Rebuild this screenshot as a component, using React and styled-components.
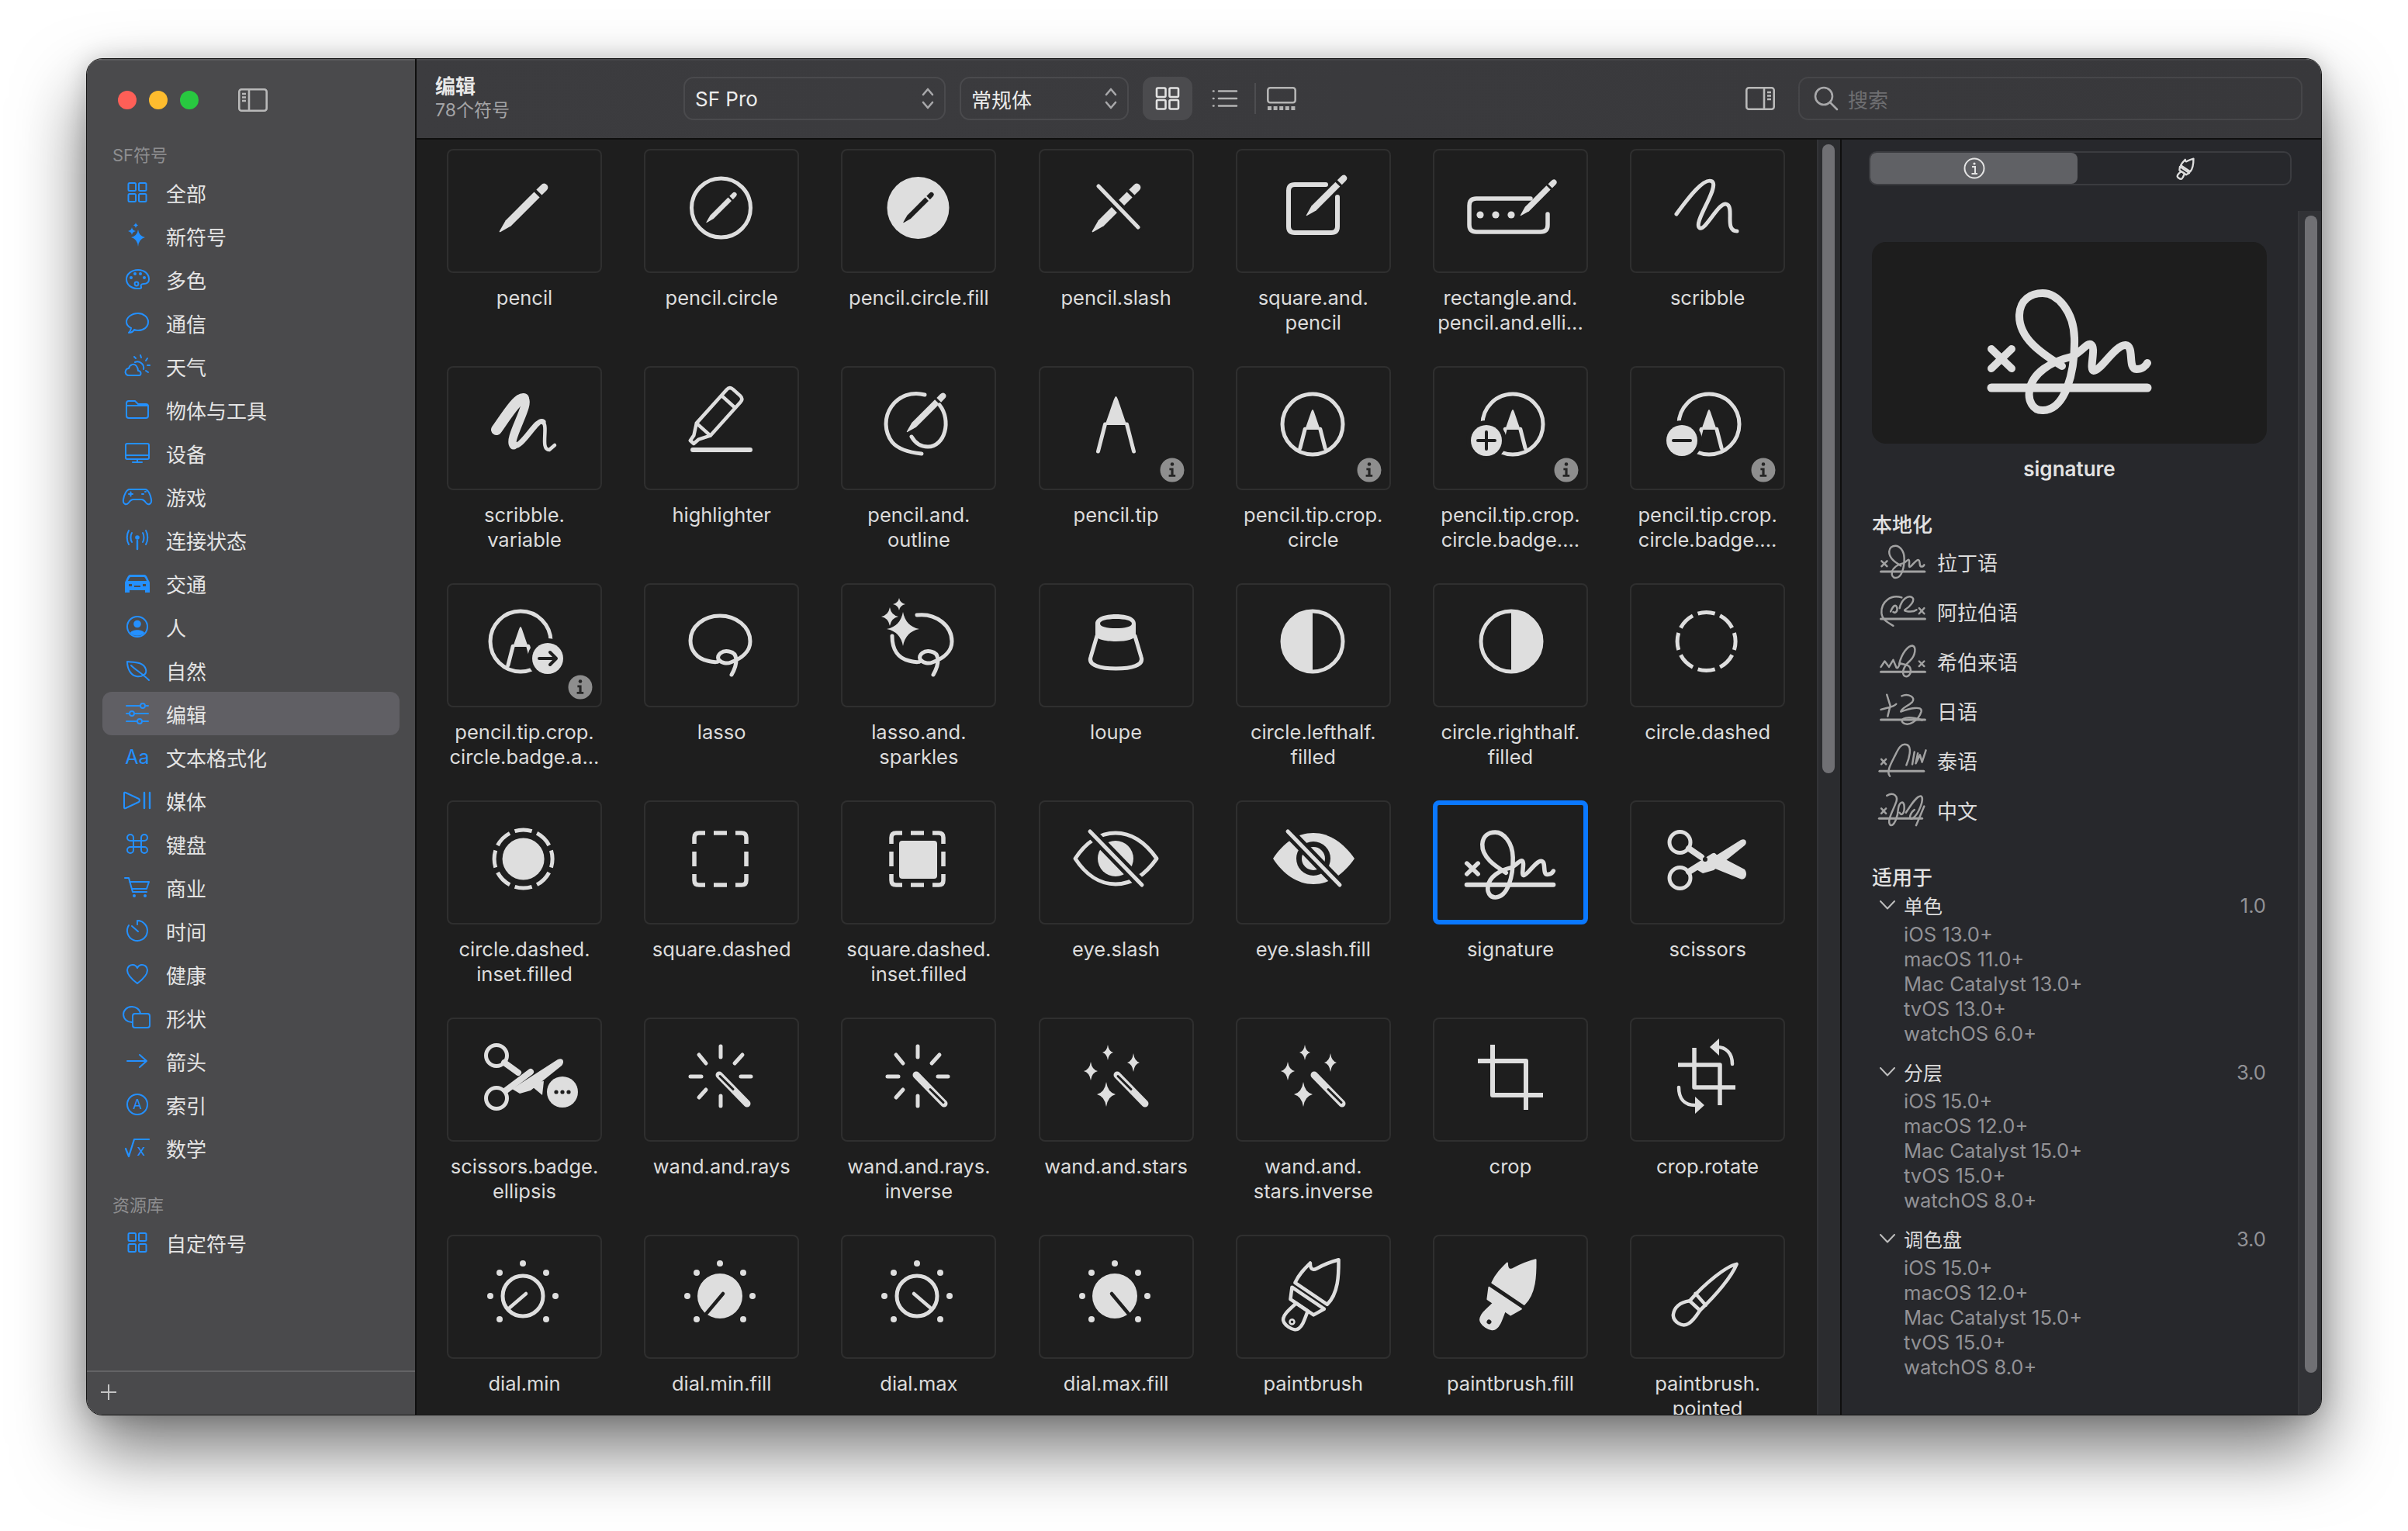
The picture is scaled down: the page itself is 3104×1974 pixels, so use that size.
import React from 'react';
import styled, { createGlobalStyle } from 'styled-components';

const L = '#dedede';
const D = '#1e1e1e';
const FONT = 'Inter, "Noto Sans CJK SC", sans-serif';

const Global = createGlobalStyle`
  html, body { margin: 0; padding: 0; background: #fff; width: 3104px; height: 1974px; overflow: hidden; }
  body { font-family: ${FONT}; }
  * { box-sizing: border-box; }
`;

const Page = styled.div`
  width: 3104px;
  height: 1974px;
  padding: 76px 0 0 112px;
`;
const Win = styled.div`
  position: relative;
  width: 2880px;
  height: 1748px;
  display: flex;
  border-radius: 20px;
  overflow: hidden;
  outline: 1px solid #151515;
  box-shadow: 0 44px 90px rgba(0, 0, 0, 0.55), 0 0 30px rgba(0, 0, 0, 0.18);
`;

/* sidebar */
const Sidebar = styled.aside`
  width: 425px;
  flex: none;
  display: flex;
  flex-direction: column;
  background: #4a4a4c;
  border-right: 2px solid #0f0f0f;
  box-shadow: inset 0 2px 0 rgba(255, 255, 255, 0.1);
`;
const TitleBar = styled.div`
  height: 109px;
  flex: none;
  display: flex;
  align-items: center;
  padding: 0 0 4px 40px;
`;
const Light = styled.span`
  width: 24px;
  height: 24px;
  border-radius: 50%;
  margin-right: 16px;
  background: ${(p) => p.$c};
`;
const PaneIcon = styled.svg`
  width: 38px;
  height: 30px;
  display: block;
  flex: none;
  margin-left: ${(p) => p.$ml || 0}px;
  color: #b9b9b9;
`;
const SideHead = styled.div`
  font-size: 22px;
  line-height: 30px;
  color: #8e8e90;
  padding-left: 33px;
  margin-top: ${(p) => p.$mt}px;
  margin-bottom: ${(p) => p.$mb}px;
`;
const SideRow = styled.div`
  height: 56px;
  flex: none;
  margin: 0 20px 0 20px;
  padding-left: 23px;
  display: flex;
  align-items: center;
  gap: 15px;
  font-size: 26px;
  color: #e4e4e4;
  border-radius: 12px;
  background: ${(p) => (p.$active ? '#605f64' : 'transparent')};
`;
const SideSvg = styled.svg`
  width: 44px;
  height: 36px;
  flex: none;
  display: block;
  color: #2490ff;
`;
const SideFoot = styled.div`
  margin-top: auto;
  height: 57px;
  flex: none;
  border-top: 2px solid #636365;
  display: flex;
  align-items: center;
  padding: 0 0 3px 16px;
`;

/* main */
const Right = styled.div`
  flex: 1;
  min-width: 0;
  display: flex;
  flex-direction: column;
`;
const Toolbar = styled.header`
  height: 104px;
  flex: none;
  display: flex;
  align-items: center;
  padding: 0 24px 0 24px;
  background: linear-gradient(90deg, #3c3c3f, #38383b);
  border-bottom: 2px solid #0f0f0f;
  box-shadow: inset 0 2px 0 rgba(255, 255, 255, 0.06);
`;
const TitleBlock = styled.div`
  width: 320px;
  flex: none;
`;
const Title = styled.div`
  font-size: 26px;
  line-height: 30px;
  font-weight: 600;
  color: #e8e8e8;
  margin-top: -3px;
`;
const Sub = styled.div`
  font-size: 23px;
  line-height: 26px;
  margin-top: 2px;
  color: #a4a4a6;
`;
const Popup = styled.div`
  width: ${(p) => p.$w}px;
  height: 56px;
  margin-right: 18px;
  flex: none;
  display: flex;
  align-items: center;
  justify-content: space-between;
  padding: 0 12px 0 13px;
  border: 2px solid #4a4a4d;
  border-radius: 13px;
  font-size: 26px;
  color: #ececec;
`;
const ViewBtn = styled.div`
  width: 64px;
  height: 56px;
  flex: none;
  display: flex;
  align-items: center;
  justify-content: center;
  border-radius: 13px;
  margin-right: ${(p) => p.$mr || 0}px;
  background: ${(p) => (p.$on ? '#4b4b4e' : 'transparent')};
`;
const Divider = styled.span`
  width: 2px;
  height: 40px;
  margin: 0 1px 0 -2px;
  flex: none;
  background: #4d4d50;
`;
const Spacer = styled.div`
  flex: 1;
`;
const Search = styled.div`
  width: 650px;
  height: 56px;
  margin-left: 30px;
  flex: none;
  display: flex;
  align-items: center;
  gap: 12px;
  padding-left: 18px;
  border: 2px solid #464649;
  border-radius: 13px;
  font-size: 26px;
  color: #6e6e71;
`;
const Body = styled.div`
  flex: 1;
  min-height: 0;
  display: flex;
`;
const GridArea = styled.main`
  flex: 1;
  min-width: 0;
  overflow: hidden;
  background: ${D};
  padding: 12px 0 0 39px;
`;
const Grid = styled.div`
  display: grid;
  grid-template-columns: repeat(7, 200px);
  grid-auto-rows: 280px;
  column-gap: 54.2px;
`;
const Cell = styled.div`
  display: flex;
  flex-direction: column;
  align-items: center;
`;
const Tile = styled.div`
  width: 200px;
  height: 160px;
  flex: none;
  border: ${(p) => (p.$sel ? '6px solid #0a78ff' : '2px solid #2f2f2f')};
  border-radius: 8px;
  background: ${D};
`;
const TileSvg = styled.svg`
  display: block;
  width: 200px;
  height: 160px;
  margin: ${(p) => (p.$sel ? -6 : -2)}px;
`;
const Label = styled.div`
  margin-top: 16px;
  width: 240px;
  text-align: center;
  white-space: pre-line;
  font-size: 25.5px;
  line-height: 32px;
  color: #dcdcdc;
`;
const ScrollTrack = styled.div`
  width: 30px;
  flex: none;
  background: #2b2c2f;
  border-left: 2px solid #333438;
  padding: 6px 0 0 5px;
`;
const Thumb = styled.div`
  width: 16px;
  height: ${(p) => p.$h}px;
  border-radius: 8px;
  background: #707074;
`;

/* inspector */
const Inspector = styled.section`
  position: relative;
  width: 620px;
  flex: none;
  background: #27282c;
  border-left: 2px solid #0f0f0f;
  padding: 15px 0 0 39px;
  color: #dcdcdc;
  overflow: hidden;
`;
const InspectorTrack = styled(ScrollTrack)`
  position: absolute;
  right: 0;
  top: 92px;
  bottom: 0;
  padding: 6px 0 0 7px;
  background: #313236;
  border-left: 2px solid #37383c;
`;
const Seg = styled.div`
  width: 545px;
  height: 44px;
  margin-left: -4px;
  display: flex;
  border: 2px solid #3b3c40;
  border-radius: 10px;
`;
const SegBtn = styled.div`
  width: ${(p) => p.$w}px;
  display: flex;
  align-items: center;
  justify-content: center;
  padding-left: ${(p) => p.$pl || 0}px;
  border-radius: 8px;
  background: ${(p) => (p.$on ? '#606165' : 'transparent')};
`;
const Preview = styled.div`
  width: 509px;
  height: 260px;
  margin-top: 73px;
  display: flex;
  justify-content: center;
  padding-top: 64px;
  border-radius: 18px;
  background: #1d1d1d;
`;
const PreviewName = styled.div`
  width: 509px;
  margin-top: 17px;
  text-align: center;
  font-size: 26px;
  line-height: 32px;
  font-weight: 600;
  color: #e2e2e2;
`;
const Head = styled.div`
  font-size: 26px;
  line-height: 32px;
  font-weight: 500;
  color: #e2e2e2;
  margin-top: ${(p) => p.$mt}px;
`;
const LangList = styled.div`
  margin-top: -1px;
`;
const LangRow = styled.div`
  height: 64px;
  display: flex;
  align-items: center;
  gap: 15px;
  padding-left: 11px;
  font-size: 26px;
  color: #dcdcdc;
`;
const LangSvg = styled.svg`
  width: 58px;
  height: 43px;
  flex: none;
  overflow: visible;
`;
const Group = styled.div`
  width: 508px;
  margin-top: ${(p) => p.$mt}px;
`;
const GroupHead = styled.div`
  height: 32px;
  display: flex;
  align-items: center;
  font-size: 25px;
  color: #dcdcdc;
  padding-left: 10px;
`;
const GroupName = styled.span`
  margin-left: 11px;
  flex: 1;
`;
const Version = styled.span`
  font-size: 25.6px;
  color: #929296;
`;
const Platforms = styled.div`
  margin-top: 6px;
  padding-left: 41px;
  font-size: 25.6px;
  line-height: 32px;
  color: #929296;
`;

/* cell glyph parts */
const Pen = ({ x, y, s = 1, c = L }) => (
  <g transform={`translate(${x} ${y}) rotate(45) scale(${s})`} fill={c} stroke="none">
    <path d="M-.6 0 L-5 -16 V-68 H5 V-16 L.6 0Z" />
    <path d="M-5 -72 H5 V-80 Q5 -86 0 -86 Q-5 -86 -5 -80Z" />
  </g>
);
const Spark = ({ x, y, r, w }) => {
  const h = w || r;
  const k = 0.16;
  return (
    <path
      fill={L}
      stroke="none"
      d={`M${x} ${y - r} Q${x + h * k} ${y - r * k} ${x + h} ${y} Q${x + h * k} ${y + r * k} ${x} ${y + r} Q${x - h * k} ${y + r * k} ${x - h} ${y} Q${x - h * k} ${y - r * k} ${x} ${y - r}Z`}
    />
  );
};
const Tip = ({ x, y, s = 1 }) => (
  <g transform={`translate(${x} ${y}) scale(${s})`}>
    <path fill={L} stroke="none" d="M0 0 C2 0 5 12 14 37 H-14 C-5 12 -2 0 0 0Z" />
    <path strokeWidth={5 / s} d="M-14 36 L-23 71 M14 36 L23 71" />
  </g>
);
const Info = () => (
  <g transform="translate(172 134)" stroke="none">
    <circle r="15.5" fill="#8e8e8e" />
    <circle cy="-7.5" r="2.3" fill="#262626" />
    <path fill="#262626" d="M-3.6 -2.6 H1.6 V6 H4.2 V8.8 H-4.4 V6 H-1.6 V.2 H-3.6Z" />
  </g>
);
const Ring = ({ x, y, r = 39 }) => <circle cx={x} cy={y} r={r} />;
const Badge = ({ x, y, children }) => (
  <g transform={`translate(${x} ${y})`}>
    <circle r="26" fill={D} stroke="none" />
    <circle r="20" fill={L} stroke="none" />
    <g stroke={D} strokeWidth="4">{children}</g>
  </g>
);
const Wand = ({ x1, y1, x2, y2, hollow }) => {
  const mx = x1 + (x2 - x1) * 0.5;
  const my = y1 + (y2 - y1) * 0.5;
  const a = hollow === 'top' ? [x1 + 1, y1 + 1.5, mx, my] : [mx, my, x2 - 1, y2 - 1.5];
  return (
    <g>
      <path strokeWidth="9" d={`M${x1} ${y1} L${x2} ${y2}`} />
      <path strokeWidth="3" stroke={D} d={`M${a[0]} ${a[1]} L${a[2]} ${a[3]}`} />
    </g>
  );
};
const Rays = () => (
  <path d="M99 37 V51 M99 101 V114 M60 76 H74 M125 76 H138 M71 48 L80 59 M127 48 L117 59 M80 93 L71 103" />
);
const STARS = (
  <g>
    <Spark x={89} y={45} r={10} w={7} />
    <Spark x={122} y={58} r={12} w={8} />
    <Spark x={67} y={69} r={12} w={9} />
    <Spark x={87} y={99} r={16} w={12} />
  </g>
);
const Dial = ({ x, needle, fill }) => {
  const y = 79;
  const dots = [[0, -42], [-30, -30], [30, -30], [-42, 0], [42, 0], [-30, 30], [30, 30]];
  return (
    <g>
      {dots.map(([dx, dy]) => (
        <circle key={dx + '_' + dy} cx={x + dx} cy={y + dy} r="4" fill={L} stroke="none" />
      ))}
      {fill ? <circle cx={x} cy={y} r="29" fill={L} stroke="none" /> : <circle cx={x} cy={y} r="26" />}
      <path stroke={fill ? D : L} strokeWidth="4.5" d={`M${x + needle * 4} ${y - 3} L${x - needle * 17} ${y + (fill ? 22 : 15)}`} />
    </g>
  );
};
const BRUSH_HEAD = 'M-25 -52 C-27 -64 -25 -74 -23 -84 C-19 -78 -15 -77 -12 -83 C-7 -93 -2 -100 5 -108 C16 -92 29 -72 25 -52Z';
const BRUSH_BAND = 'M-25 -45 H25 L18 -31 H-18Z';
const BRUSH_HANDLE = 'M-9 -31 C-12 -18 -14 -12 -12 -6 C-10 2 10 2 12 -6 C14 -12 12 -18 9 -31Z';
const BRUSH_AT = 'translate(68 119) rotate(34)';
const Brush = ({ filled }) => (
  <g transform={BRUSH_AT}>
    <g fill={filled ? L : 'none'} stroke={L} strokeWidth={filled ? 2 : 4.5}>
      <path d={BRUSH_HEAD} />
      <path d={BRUSH_BAND} />
      <path d={BRUSH_HANDLE} />
    </g>
    <circle cy="-8" r="3" fill={filled ? D : 'none'} stroke={filled ? 'none' : L} strokeWidth="2.5" />
  </g>
);

const SIG_LOOP =
  'M96 96 C70 80 40 60 41 30 C42 10 56 2 71 2 C90 2 111 25 112 60 C113 105 100 152 72 153 C58 154 52 140 54 128 C57 105 82 90 108 84 C120 79 128 66 133 68 C141 72 130 101 137 102 C146 102 165 68 178 69 C190 70 180 100 192 100 C199 100 204 96 206 92';
const SIG_X = 'M5 74 L31 99 M31 74 L5 99';
const Sig = ({ c = L }) => (
  <g fill="none" stroke={c} strokeLinecap="round" strokeLinejoin="round">
    <path strokeWidth="10" d={SIG_LOOP} />
    <path strokeWidth="10" d={SIG_X} />
    <path strokeWidth="11" d="M5 124 H206" />
  </g>
);

const EYE = 'M47 75 C60 55 78 42 99 42 C120 42 138 55 152 75 C138 95 120 108 99 108 C78 108 60 95 47 75Z';
const SLASH = 'M66 40 L133 109';
const LASSO = 'M113 118 C121 104 122 90 110 88 C101 86 94 92 96 98 C98 103 90 102 82 100 C68 97 60 86 60 74 C60 56 77 42 98 42 C119 42 137 56 137 75 C137 88 126 97 112 102 C107 104 100 103 97 99';

const cornerDash = (x1, y1, x2, y2) =>
  `M${x1} ${y1 + 14} V${y1 + 6} Q${x1} ${y1} ${x1 + 6} ${y1} H${x1 + 14} M${x2 - 14} ${y1} H${x2 - 6} Q${x2} ${y1} ${x2} ${y1 + 6} V${y1 + 14} M${x2} ${y2 - 14} V${y2 - 6} Q${x2} ${y2} ${x2 - 6} ${y2} H${x2 - 14} M${x1 + 14} ${y2} H${x1 + 6} Q${x1} ${y2} ${x1} ${y2 - 6} V${y2 - 14} M${x1 + 25} ${y1} H${x2 - 25} M${x1 + 25} ${y2} H${x2 - 25} M${x1} ${y1 + 24} V${y2 - 24} M${x2} ${y1 + 24} V${y2 - 24}`;

const glyphs = {
  pencil: <Pen x={68} y={107} />,
  pencilCircle: (
    <g>
      <Ring x={99.5} y={76} r={38} />
      <Pen x={80.5} y={95} s={0.63} />
    </g>
  ),
  pencilCircleFill: (
    <g>
      <circle cx="99.5" cy="76" r="40" fill={L} stroke="none" />
      <Pen x={80.5} y={95} s={0.63} c={D} />
    </g>
  ),
  pencilSlash: (
    <g>
      <Pen x={69} y={107} />
      <path stroke={D} strokeWidth="13" d="M77 48 L128 101" />
      <path d="M77 48 L128 101" />
    </g>
  ),
  squarePencil: (
    <g>
      <path strokeWidth="6" d="M116 46 H76 Q68 46 68 54 V100 Q68 108 76 108 H123 Q131 108 131 100 V62" />
      <Pen x={91} y={86} s={0.84} />
    </g>
  ),
  rectPencil: (
    <g>
      <path strokeWidth="5.5" d="M126 64 H56 Q47 64 47 73 V98 Q47 107 56 107 H139 Q148 107 148 98 V84" />
      <circle cx="61" cy="85" r="4.6" fill={L} stroke="none" />
      <circle cx="81" cy="85" r="4.6" fill={L} stroke="none" />
      <circle cx="101" cy="85" r="4.6" fill={L} stroke="none" />
      <Pen x={113} y={86} s={0.75} />
    </g>
  ),
  scribble: <path d="M60 84 C76 62 96 36 106 42 C116 50 80 96 90 102 C98 106 116 64 126 72 C134 78 122 106 138 106" />,
  scribbleVar: (
    <g>
      <path strokeWidth="14" d="M64 82 C78 62 92 40 99 42" />
      <path strokeWidth="11" d="M99 42 C110 46 78 94 86 102" />
      <path strokeWidth="7" d="M86 102 C96 108 116 66 124 72" />
      <path strokeWidth="4.5" d="M124 72 C131 78 120 108 132 108 L139 102" />
    </g>
  ),
  highlighter: (
    <g>
      <path strokeWidth="6" d="M63 108 H137" />
      <g transform="translate(62 98) rotate(42)">
        <path strokeWidth="4.5" d="M-3 0 L-4 -8 L-12 -22 V-80 Q-12 -86 -6 -86 H6 Q12 -86 12 -80 V-22 L4 -8 L3 0Z M-12 -22 H12 M-12 -70 H12" />
      </g>
    </g>
  ),
  pencilOutline: (
    <g>
      <path d="M108 37 A39 39 0 0 0 66 98 Q76 110 104 113" />
      <path d="M127 50 C143 70 134 104 112 104 C102 104 95 98 91 91" />
      <Pen x={85} y={85} s={0.81} />
    </g>
  ),
  pencilTip: <Tip x={99.5} y={39} />,
  tipCircle: (
    <g>
      <Ring x={99} y={75} />
      <Tip x={99} y={56} s={0.7} />
    </g>
  ),
  tipPlus: (
    <g>
      <Ring x={103} y={75} />
      <Tip x={103} y={56} s={0.7} />
      <Badge x={69} y={96}>
        <path d="M-11 0 H11 M0 -11 V11" />
      </Badge>
    </g>
  ),
  tipMinus: (
    <g>
      <Ring x={102} y={75} />
      <Tip x={102} y={56} s={0.7} />
      <Badge x={67} y={96}>
        <path d="M-11 0 H11" />
      </Badge>
    </g>
  ),
  tipArrow: (
    <g>
      <Ring x={95} y={75} />
      <Tip x={95} y={56} s={0.7} />
      <Badge x={130} y={97}>
        <path d="M-11 0 H10 M3 -8 L11 0 L3 8" />
      </Badge>
    </g>
  ),
  lasso: <path d={LASSO} />,
  lassoSparkles: (
    <g>
      <g transform="translate(6 0)">
        <path d="M113 118 C121 104 122 90 110 88 C101 86 94 92 96 98 C98 103 90 102 82 100 C68 97 60 86 60 68 M92 41 C118 38 137 56 137 75 C137 88 126 97 112 102 C107 104 100 103 97 99" />
      </g>
      <Spark x={80} y={59} r={22} w={21} />
      <Spark x={63} y={43} r={12} w={11} />
      <Spark x={75} y={27} r={8} w={8} />
    </g>
  ),
  loupe: (
    <g>
      <path
        fill={L}
        stroke="none"
        fillRule="evenodd"
        d="M73 52 C73 44 85 40 99.5 40 C114 40 125 44 125 52 V66 C125 72 114 75 99.5 75 C85 75 73 72 73 66Z M79 52 C79 56 88 58 99.5 58 C111 58 120 56 120 52 C120 48 111 46 99.5 46 C88 46 79 48 79 52Z"
      />
      <path d="M75 68 L67 95 C63 106 80 110 99.5 110 C119 110 136 106 132 95 L124 68" />
    </g>
  ),
  circleLeft: (
    <g>
      <Ring x={99} y={75} />
      <path fill={L} stroke="none" d="M99 36 A39 39 0 0 0 99 114Z" />
    </g>
  ),
  circleRight: (
    <g>
      <Ring x={101} y={75} />
      <path fill={L} stroke="none" d="M101 36 A39 39 0 0 1 101 114Z" />
    </g>
  ),
  circleDashed: (
    <circle cx="98.6" cy="75" r="37.5" strokeLinecap="butt" strokeDasharray="22.4 7" strokeDashoffset="11.2" transform="rotate(-90 98.6 75)" />
  ),
  circleDashedFill: (
    <g>
      <circle cx="98.6" cy="75.5" r="37.5" strokeLinecap="butt" strokeDasharray="22.4 7" strokeDashoffset="11.2" transform="rotate(-90 98.6 75.5)" />
      <circle cx="98.6" cy="75.5" r="27" fill={L} stroke="none" />
    </g>
  ),
  squareDashed: <path strokeWidth="5.5" strokeLinecap="butt" d={cornerDash(65, 42, 132, 109)} />,
  squareDashedFill: (
    <g>
      <path strokeWidth="5.5" strokeLinecap="butt" d={cornerDash(65, 42, 132, 109)} />
      <rect x="75" y="52" width="49" height="49" rx="4" fill={L} stroke="none" />
    </g>
  ),
  eyeSlash: (
    <g>
      <path d={EYE} />
      <circle cx="99" cy="75" r="23" fill={L} stroke="none" />
      <path stroke={D} strokeWidth="14" d={SLASH} />
      <path d={SLASH} />
    </g>
  ),
  eyeSlashFill: (
    <g transform="translate(1 0)">
      <path fill={L} stroke="none" d={EYE} />
      <circle cx="99" cy="75" r="22" fill={D} stroke="none" />
      <circle cx="99" cy="75" r="15" fill={L} stroke="none" />
      <path stroke={D} strokeWidth="14" d={SLASH} />
      <path d={SLASH} />
    </g>
  ),
  signature: (
    <g transform="translate(41 40) scale(.555)">
      <Sig />
    </g>
  ),
  scissors: (
    <g>
      <circle cx="64.5" cy="54" r="13.5" />
      <circle cx="64.5" cy="100" r="13.5" />
      <path strokeWidth="8" d="M76 62 L92 73 M76 92 L108 72" />
      <path fill={L} stroke="none" d="M84 88 L143 51 C149 48 152 54 148 58 L108 90 L94 94Z" />
      <path fill={L} stroke="none" d="M108 68 L148 89 C153 96 148 104 142 101 L100 84Z" />
      <circle cx="97" cy="76" r="3" fill={D} stroke="none" />
    </g>
  ),
  scissorsBadge: (
    <g>
      <circle cx="64" cy="49" r="13.5" />
      <circle cx="64" cy="104" r="13.5" />
      <path strokeWidth="8" d="M74 58 L92 71 M76 94 L108 70" />
      <path fill={L} stroke="none" d="M84 92 L143 54 C150 51 152 57 148 62 L108 94 L94 98Z" />
      <path fill={L} stroke="none" d="M104 84 L125 82 L123 100Z" />
      <circle cx="149" cy="96" r="20" fill={L} stroke="none" />
      <g fill={D} stroke="none">
        <circle cx="141" cy="96" r="2.6" />
        <circle cx="149" cy="96" r="2.6" />
        <circle cx="157" cy="96" r="2.6" />
      </g>
    </g>
  ),
  wandRays: (
    <g>
      <Rays />
      <Wand x1={97} y1={74} x2={133} y2={111} hollow="top" />
    </g>
  ),
  wandRaysInv: (
    <g>
      <Rays />
      <Wand x1={97} y1={74} x2={133} y2={111} hollow="bottom" />
    </g>
  ),
  wandStars: (
    <g>
      {STARS}
      <Wand x1={101} y1={74} x2={137} y2={111} hollow="top" />
    </g>
  ),
  wandStarsInv: (
    <g>
      {STARS}
      <Wand x1={101} y1={74} x2={137} y2={111} hollow="bottom" />
    </g>
  ),
  crop: <path strokeWidth="6" strokeLinecap="butt" d="M77 35 V100 H142 M58 56 H120 V119" />,
  cropRotate: (
    <g>
      <path strokeWidth="5.5" strokeLinecap="butt" d="M83 39 V90 H136 M62 61 H116 V113" />
      <path strokeWidth="4.5" d="M132 60 C132 46 124 38 112 38 M63 90 C63 104 70 113 84 113" />
      <path fill={L} stroke="none" d="M103 38 L115 27 V49Z M96 113 L84 102 V124Z" />
    </g>
  ),
  dialMin: <Dial x={98} needle={1} />,
  dialMinFill: <Dial x={98} needle={1} fill />,
  dialMax: <Dial x={98} needle={-1} />,
  dialMaxFill: <Dial x={98} needle={-1} fill />,
  brush: <Brush />,
  brushFill: <Brush filled />,
  brushPointed: (
    <g transform="translate(70 106) rotate(43)">
      <path strokeWidth="4.5" d="M-9 -20 C-10 -50 -5 -85 3 -96 C9 -80 11 -50 9 -20Z M-10 -32 L10 -30" />
      <path strokeWidth="4.5" d="M-9 -20 C-17 -10 -18 0 -12 8 C-6 14 8 12 10 2 C12 -6 10 -14 9 -20" />
    </g>
  ),
};

const cells = [
  ['pencil', 'pencil'],
  ['pencil.circle', 'pencilCircle'],
  ['pencil.circle.fill', 'pencilCircleFill'],
  ['pencil.slash', 'pencilSlash'],
  ['square.and.\npencil', 'squarePencil'],
  ['rectangle.and.\npencil.and.elli...', 'rectPencil'],
  ['scribble', 'scribble'],
  ['scribble.\nvariable', 'scribbleVar'],
  ['highlighter', 'highlighter'],
  ['pencil.and.\noutline', 'pencilOutline'],
  ['pencil.tip', 'pencilTip', true],
  ['pencil.tip.crop.\ncircle', 'tipCircle', true],
  ['pencil.tip.crop.\ncircle.badge....', 'tipPlus', true],
  ['pencil.tip.crop.\ncircle.badge....', 'tipMinus', true],
  ['pencil.tip.crop.\ncircle.badge.a...', 'tipArrow', true],
  ['lasso', 'lasso'],
  ['lasso.and.\nsparkles', 'lassoSparkles'],
  ['loupe', 'loupe'],
  ['circle.lefthalf.\nfilled', 'circleLeft'],
  ['circle.righthalf.\nfilled', 'circleRight'],
  ['circle.dashed', 'circleDashed'],
  ['circle.dashed.\ninset.filled', 'circleDashedFill'],
  ['square.dashed', 'squareDashed'],
  ['square.dashed.\ninset.filled', 'squareDashedFill'],
  ['eye.slash', 'eyeSlash'],
  ['eye.slash.fill', 'eyeSlashFill'],
  ['signature', 'signature', false, true],
  ['scissors', 'scissors'],
  ['scissors.badge.\nellipsis', 'scissorsBadge'],
  ['wand.and.rays', 'wandRays'],
  ['wand.and.rays.\ninverse', 'wandRaysInv'],
  ['wand.and.stars', 'wandStars'],
  ['wand.and.\nstars.inverse', 'wandStarsInv'],
  ['crop', 'crop'],
  ['crop.rotate', 'cropRotate'],
  ['dial.min', 'dialMin'],
  ['dial.min.fill', 'dialMinFill'],
  ['dial.max', 'dialMax'],
  ['dial.max.fill', 'dialMaxFill'],
  ['paintbrush', 'brush'],
  ['paintbrush.fill', 'brushFill'],
  ['paintbrush.\npointed', 'brushPointed'],
];

/* sidebar icons, 44x36 box */
const B = '#2490ff';
const gridSquares = (
  <g>
    <rect x="10.5" y="6" width="9.5" height="10" rx="1.5" />
    <rect x="24" y="6" width="9.5" height="10" rx="1.5" />
    <rect x="10.5" y="20" width="9.5" height="10" rx="1.5" />
    <rect x="24" y="20" width="9.5" height="10" rx="1.5" />
  </g>
);
const sideIcons = {
  all: gridSquares,
  spark: (
    <g fill={B} stroke="none">
      <path d="M23 10 Q24 18 32 20 Q24 22 23 32 Q22 22 14 20 Q22 18 23 10Z" />
      <path d="M15 7 Q15.5 11 20 12 Q15.5 13 15 17 Q14.5 13 10 12 Q14.5 11 15 7Z" />
      <path d="M20 1 Q20.3 4 23 4.5 Q20.3 5 20 8 Q19.7 5 17 4.5 Q19.7 4 20 1Z" />
    </g>
  ),
  palette: (
    <g>
      <path d="M23 6 C31 6 37 11 37 18 C37 23 33 24 30 24 C27 24 26 26 27 28 C28 30 25 30 22 30 C14 30 8 25 8 18 C8 11 15 6 23 6Z" />
      <g fill={B} stroke="none">
        <circle cx="14" cy="16" r="2" />
        <circle cx="19" cy="11" r="2" />
        <circle cx="26" cy="11" r="2" />
        <circle cx="31" cy="16" r="2" />
      </g>
      <circle cx="21" cy="24" r="2.4" />
    </g>
  ),
  chat: <path d="M23 6 C30 6 36 11 36 17 C36 24 30 28 23 28 C21 28 20 28 18 27 C17 29 14 31 11 31 C13 29 14 27 14 25 C10 23 8 20 8 17 C8 11 15 6 23 6Z" />,
  weather: (
    <g>
      <path d="M11 30 C7 30 6 26 7 24 C8 21 10 21 11 21 C12 16 18 14 21 18 C23 21 23 23 23 24 C27 24 28 30 24 30Z" />
      <path d="M19 13 A8 8 0 0 1 30 22 M26 4 L27 7 M35 8 L33 11 M38 17 H35 M36 26 L33 24 M18 6 L20 8" />
    </g>
  ),
  folder: <path d="M8 10 Q8 7 11 7 H19 L23 11 H33 Q36 11 36 14 V26 Q36 29 33 29 H11 Q8 29 8 26Z M8 13 H36" />,
  display: (
    <g>
      <rect x="7" y="6" width="30" height="20" rx="2" />
      <path d="M7 21 H37 M16 30 H28 M22 26 V30" />
    </g>
  ),
  game: (
    <g>
      <path d="M12 9 H32 C36 9 39 16 40 22 C41 28 36 30 33 26 C31 23 29 22 27 22 H17 C15 22 13 23 11 26 C8 30 3 28 4 22 C5 16 8 9 12 9Z" />
      <path d="M11 15 H16 M13.5 12.5 V17.5 M28 15 H30 M32 12 H33" />
    </g>
  ),
  signal: (
    <g>
      <path d="M22 19 V30" strokeWidth="2.4" />
      <circle cx="22" cy="15" r="2.8" fill={B} stroke="none" />
      <path d="M15 9 C13 12 13 18 15 21 M29 9 C31 12 31 18 29 21 M11 6 C8 11 8 19 11 24 M33 6 C36 11 36 19 33 24" />
    </g>
  ),
  car: (
    <g fill={B} stroke="none" fillRule="evenodd">
      <path d="M13 7 H31 C34 7 35 11 37 15 C38 16 38 17 38 20 V30 H32 V27 H12 V30 H6 V20 C6 17 6 16 7 15 C9 11 10 7 13 7Z M13 10 C11.5 11 11 13 10 15 H34 C33 13 32.5 11 31 10Z M11 19 V22 H15 V19Z M29 19 V22 H33 V19Z M18 21 V23 H26 V21Z" />
    </g>
  ),
  person: (
    <g>
      <circle cx="22" cy="18" r="13" />
      <circle cx="22" cy="14.5" r="4.8" fill={B} stroke="none" />
      <path fill={B} stroke="none" d="M13 26 C15 21 29 21 31 26 C28 31 16 31 13 26Z" />
    </g>
  ),
  leaf: <path d="M9 7 C18 8 30 7 33 17 C35 24 27 27 21 26 C14 25 9 17 9 7Z M14 12 C20 18 28 22 37 31" />,
  sliders: (
    <g strokeWidth="1.9">
      <path d="M8 8 H26 M32 8 H36 M8 18 H12 M18 18 H36 M8 28 H22 M28 28 H36" />
      <circle cx="29" cy="8" r="3" />
      <circle cx="15" cy="18" r="3" />
      <circle cx="25" cy="28" r="3" />
    </g>
  ),
  text: (
    <text x="22" y="27" textAnchor="middle" fontFamily="Inter, sans-serif" fontSize="25" fill={B} stroke="none">
      Aa
    </text>
  ),
  media: (
    <g>
      <path d="M5 9 Q5 7 7 8 L24 16 Q26 18 24 20 L7 28 Q5 29 5 27Z" />
      <path d="M31 8 V28 M38 8 V28" strokeWidth="2.4" />
    </g>
  ),
  command: <path d="M17 14 V22 H27 V14 H17 V10 A4 4 0 1 0 13 14 H31 A4 4 0 1 0 27 10 V26 A4 4 0 1 0 31 22 H13 A4 4 0 1 0 17 26 V22" />,
  cart: (
    <g>
      <path d="M6 6 H11 L16 24 H34 M12 11 H37 L34 20 H15" />
      <circle cx="18" cy="29" r="2" fill={B} stroke="none" />
      <circle cx="32" cy="29" r="2" fill={B} stroke="none" />
    </g>
  ),
  timer: <path d="M22 5 A13 13 0 1 1 11 11 M22 5 V10 M15 12 L23 19" />,
  heart: <path d="M22 30 C14 24 9 19 9 13 C9 8 13 6 16 6 C19 6 21 8 22 10 C23 8 25 6 28 6 C31 6 35 8 35 13 C35 19 30 24 22 30Z" />,
  shapes: (
    <g>
      <path d="M19 24 A11 10 0 1 1 30 13" transform="translate(-4 0)" />
      <rect x="16" y="13" width="22" height="18" rx="3" />
    </g>
  ),
  arrow: <path d="M9 18 H34 M25 10 L34 18 L25 26" />,
  index: (
    <g>
      <circle cx="22" cy="18" r="13" />
      <text x="22" y="24" textAnchor="middle" fontFamily="Inter, sans-serif" fontSize="17" fill={B} stroke="none">
        A
      </text>
    </g>
  ),
  math: (
    <g>
      <path d="M7 19 L11 29 L18 7 H37" strokeWidth="2.2" />
      <text x="27" y="28" textAnchor="middle" fontFamily="Inter, sans-serif" fontSize="20" fill={B} stroke="none">
        x
      </text>
    </g>
  ),
};

const SideIcon = ({ name }) => (
  <SideSvg viewBox="0 0 44 36" fill="none" stroke={B} strokeWidth="2" strokeLinecap="round" strokeLinejoin="round">
    {sideIcons[name]}
  </SideSvg>
);

const categories = [
  ['all', '全部'], ['spark', '新符号'], ['palette', '多色'], ['chat', '通信'], ['weather', '天气'],
  ['folder', '物体与工具'], ['display', '设备'], ['game', '游戏'], ['signal', '连接状态'], ['car', '交通'],
  ['person', '人'], ['leaf', '自然'], ['sliders', '编辑'], ['text', '文本格式化'], ['media', '媒体'],
  ['command', '键盘'], ['cart', '商业'], ['timer', '时间'], ['heart', '健康'], ['shapes', '形状'],
  ['arrow', '箭头'], ['index', '索引'], ['math', '数学'],
];

const langs = [
  ['拉丁语', <g key="a"><path d={SIG_LOOP} /><path d={SIG_X} /><path strokeWidth="11" d="M2 124 H208" /></g>],
  ['阿拉伯语', <g key="b"><path d="M100 12 C50 -4 2 30 5 85 C8 115 30 128 60 145 M48 78 C60 50 72 40 78 60 C82 78 70 88 60 80 M90 62 C100 20 130 -2 150 12 C165 25 140 55 115 70 C105 76 150 85 170 70 M182 62 L206 88 M206 62 L182 88" /><path strokeWidth="11" d="M2 113 H210" /></g>],
  ['希伯来语', <g key="c"><path d="M2 105 L20 78 L40 105 L60 72 L75 108 C80 115 85 105 92 90 M88 92 C100 40 130 5 150 5 C170 10 165 50 140 75 C110 100 100 130 110 145 C125 160 150 140 140 110 C135 92 110 95 92 88 M182 78 L206 102 M206 78 L182 102" /><path strokeWidth="11" d="M2 128 H210" /></g>],
  ['日语', <g key="d"><path d="M2 72 C30 62 60 62 74 46 M30 2 L46 54 L34 104 M100 8 C130 -6 168 14 150 36 C130 56 100 64 96 82 C130 70 200 50 192 82 C180 122 130 158 104 132 C90 112 130 100 196 122" /><path strokeWidth="11" d="M2 120 H210" /></g>],
  ['泰语', <g key="e"><path d="M4 72 L26 96 M26 72 L4 96 M44 152 C26 132 50 92 70 52 C85 20 100 -6 125 4 C150 14 135 70 122 100 M160 38 L150 96 M176 44 L166 92 L186 52 L196 86 L214 30" /><path strokeWidth="11" d="M-4 128 H204" /></g>],
  ['中文', <g key="f"><path d="M4 70 L26 94 M26 70 L4 94 M30 10 C60 -8 90 10 70 50 C54 90 30 130 46 148 C64 158 82 110 84 70 C88 40 110 30 112 60 C114 90 100 110 90 90 M120 90 C140 60 170 10 190 12 C210 20 180 100 150 118 C130 124 140 90 160 76 M168 150 L206 60" /><path strokeWidth="11" d="M-6 117 H196" /></g>],
];

const groups = [
  ['单色', '1.0', ['iOS 13.0+', 'macOS 11.0+', 'Mac Catalyst 13.0+', 'tvOS 13.0+', 'watchOS 6.0+']],
  ['分层', '3.0', ['iOS 15.0+', 'macOS 12.0+', 'Mac Catalyst 15.0+', 'tvOS 15.0+', 'watchOS 8.0+']],
  ['调色盘', '3.0', ['iOS 15.0+', 'macOS 12.0+', 'Mac Catalyst 15.0+', 'tvOS 15.0+', 'watchOS 8.0+']],
];

const Chevrons = () => (
  <svg width="18" height="30" viewBox="0 0 18 30" fill="none" stroke="#a8a8aa" strokeWidth="2.6" strokeLinecap="round" strokeLinejoin="round">
    <path d="M3 10 L9 3 L15 10 M3 20 L9 27 L15 20" />
  </svg>
);

export default function App() {
  return (
    <Page>
      <Global />
      <Win>
        <Sidebar>
          <TitleBar>
            <Light $c="#ff5f57" />
            <Light $c="#febc2e" />
            <Light $c="#28c840" />
            <PaneIcon $ml={35} viewBox="0 0 38 30" fill="none" stroke="currentColor" strokeWidth="2.6">
              <rect x="1.3" y="1.3" width="35.4" height="27.4" rx="3" />
              <path d="M14 1.3 V28.7 M5 7 H10 M5 11.5 H10 M5 16 H10" />
            </PaneIcon>
          </TitleBar>
          <SideHead $mt={0} $mb={5}>SF符号</SideHead>
          {categories.map(([icon, name]) => (
            <SideRow key={name} $active={name === '编辑'}>
              <SideIcon name={icon} />
              {name}
            </SideRow>
          ))}
          <SideHead $mt={31} $mb={5}>资源库</SideHead>
          <SideRow>
            <SideIcon name="all" />
            自定符号
          </SideRow>
          <SideFoot>
            <svg width="24" height="24" viewBox="0 0 24 24" stroke="#c4c4c4" strokeWidth="2">
              <path d="M12 2 V22 M2 12 H22" />
            </svg>
          </SideFoot>
        </Sidebar>
        <Right>
          <Toolbar>
            <TitleBlock>
              <Title>编辑</Title>
              <Sub>78个符号</Sub>
            </TitleBlock>
            <Popup $w={338}>
              SF Pro
              <Chevrons />
            </Popup>
            <Popup $w={218}>
              常规体
              <Chevrons />
            </Popup>
            <ViewBtn $on $mr={10}>
              <svg width="32" height="30" viewBox="0 0 32 30" fill="none" stroke="#e2e2e2" strokeWidth="2.6">
                <rect x="2" y="1.5" width="11.5" height="11.5" rx="1.5" />
                <rect x="18.5" y="1.5" width="11.5" height="11.5" rx="1.5" />
                <rect x="2" y="17" width="11.5" height="11.5" rx="1.5" />
                <rect x="18.5" y="17" width="11.5" height="11.5" rx="1.5" />
              </svg>
            </ViewBtn>
            <ViewBtn $mr={8}>
              <svg width="34" height="24" viewBox="0 0 34 24" fill="none" stroke="#b4b4b4" strokeWidth="2.6" strokeLinecap="round">
                <path d="M9 2.5 H32 M9 12 H32 M9 21.5 H32 M2 2.5 H2.5 M2 12 H2.5 M2 21.5 H2.5" />
              </svg>
            </ViewBtn>
            <Divider />
            <ViewBtn>
              <svg width="38" height="30" viewBox="0 0 38 30" fill="none" stroke="#b4b4b4" strokeWidth="2.6">
                <rect x="1.3" y="1.3" width="35.4" height="19" rx="3" />
                <path strokeWidth="5" strokeDasharray="5 2.6" d="M1 27.5 H37" />
              </svg>
            </ViewBtn>
            <Spacer />
            <PaneIcon viewBox="0 0 38 30" fill="none" stroke="currentColor" strokeWidth="2.6">
              <rect x="1.3" y="1.3" width="35.4" height="27.4" rx="3" />
              <path d="M24 1.3 V28.7 M28 7 H33 M28 11.5 H33 M28 16 H33" />
            </PaneIcon>
            <Search>
              <svg width="32" height="32" viewBox="0 0 32 32" fill="none" stroke="#a8a8aa" strokeWidth="2.6" strokeLinecap="round">
                <circle cx="13" cy="13" r="11" />
                <path d="M21 21 L30 30" />
              </svg>
              搜索
            </Search>
          </Toolbar>
          <Body>
            <GridArea>
              <Grid>
                {cells.map(([name, key, info, sel]) => (
                  <Cell key={key}>
                    <Tile $sel={sel}>
                      <TileSvg
                        $sel={sel}
                        viewBox="0 0 200 160"
                        fill="none"
                        stroke={L}
                        strokeWidth="5"
                        strokeLinecap="round"
                        strokeLinejoin="round"
                      >
                        {glyphs[key]}
                        {info && <Info />}
                      </TileSvg>
                    </Tile>
                    <Label>{name}</Label>
                  </Cell>
                ))}
              </Grid>
            </GridArea>
            <ScrollTrack>
              <Thumb $h={811} />
            </ScrollTrack>
            <Inspector>
              <Seg>
                <SegBtn $w={267} $on>
                  <svg width="28" height="28" viewBox="0 0 28 28" fill="none" stroke="#e4e4e4" strokeWidth="2">
                    <circle cx="14" cy="14" r="12.5" />
                    <circle cx="14" cy="8" r="1.6" fill="#e4e4e4" stroke="none" />
                    <path d="M11 12 H15 V21 M10.5 21 H18" />
                  </svg>
                </SegBtn>
                <SegBtn $w={274} $pl={6}>
                  <svg width="30" height="32" viewBox="50 20 100 110" fill="none" stroke={L} strokeWidth="8" strokeLinecap="round" strokeLinejoin="round">
                    <g transform={BRUSH_AT}>
                      <path d={BRUSH_HEAD} />
                      <path d={BRUSH_BAND} />
                      <path d={BRUSH_HANDLE} />
                    </g>
                  </svg>
                </SegBtn>
              </Seg>
              <Preview>
                <svg width="212" height="156" viewBox="0 0 212 156" style={{ overflow: 'visible' }}>
                  <Sig />
                </svg>
              </Preview>
              <PreviewName>signature</PreviewName>
              <Head $mt={40}>本地化</Head>
              <LangList>
                {langs.map(([name, art]) => (
                  <LangRow key={name}>
                    <LangSvg viewBox="0 0 212 156" fill="none" stroke="#a2a2a2" strokeWidth="9" strokeLinecap="round" strokeLinejoin="round">
                      {art}
                    </LangSvg>
                    {name}
                  </LangRow>
                ))}
              </LangList>
              <Head $mt={40}>适用于</Head>
              {groups.map(([name, ver, items], i) => (
                <Group key={name} $mt={i === 0 ? 3 : 17}>
                  <GroupHead>
                    <svg width="20" height="12" viewBox="0 0 20 12" fill="none" stroke="#bdbdbd" strokeWidth="2" strokeLinecap="round" strokeLinejoin="round">
                      <path d="M1 1 L10 10.5 L19 1" />
                    </svg>
                    <GroupName>{name}</GroupName>
                    <Version>{ver}</Version>
                  </GroupHead>
                  <Platforms>
                    {items.map((t) => (
                      <div key={t}>{t}</div>
                    ))}
                  </Platforms>
                </Group>
              ))}
              <InspectorTrack>
                <Thumb $h={1492} />
              </InspectorTrack>
            </Inspector>
          </Body>
        </Right>
      </Win>
    </Page>
  );
}
